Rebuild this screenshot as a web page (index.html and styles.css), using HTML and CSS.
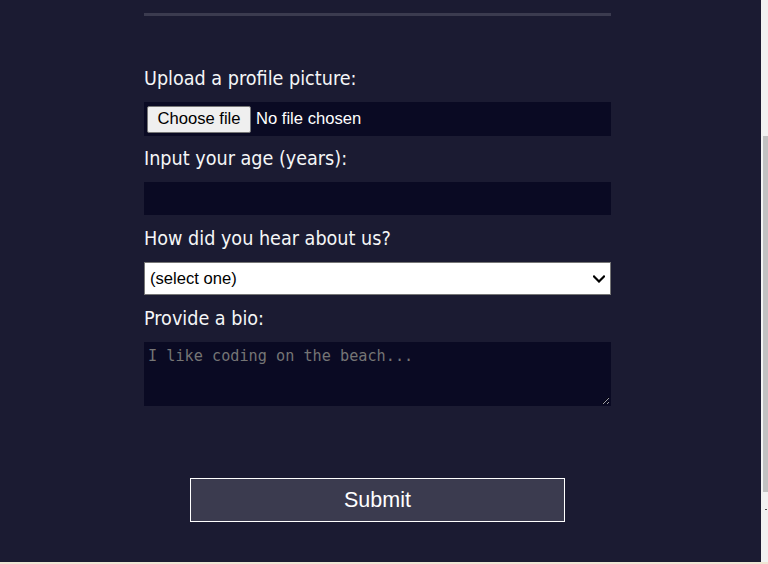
FILE: index.html
```html
<!DOCTYPE html>
<html lang="en">
<head>
<meta charset="utf-8">
<title>Survey Form</title>
<link rel="stylesheet" href="styles.css">
</head>
<body>
<div class="viewport">
  <main class="page">
    <form class="survey" onsubmit="return false">
      <div class="divider"></div>
      <label class="field-label" for="picture">Upload a profile picture:</label>
      <div class="file-field">
        <label class="file-button" for="picture">Choose file</label>
        <span class="file-status">No file chosen</span>
        <input class="file-hidden" id="picture" type="file" name="file">
      </div>
      <label class="field-label" for="age">Input your age (years):</label>
      <input class="text-input" id="age" type="number" name="age" min="13" max="120">
      <label class="field-label" for="referrer">How did you hear about us?</label>
      <div class="select-wrap">
        <select class="select-input" id="referrer" name="referrer">
          <option value="">(select one)</option>
          <option value="1">freeCodeCamp News</option>
          <option value="2">freeCodeCamp YouTube Channel</option>
          <option value="3">freeCodeCamp Forum</option>
          <option value="4">Other</option>
        </select>
        <svg class="select-chevron" width="12" height="8" viewBox="0 0 12 8" aria-hidden="true">
          <path d="M1 1.5 L6 6.5 L11 1.5" fill="none" stroke="#000" stroke-width="2.2" stroke-linecap="square" stroke-linejoin="miter"/>
        </svg>
      </div>
      <label class="field-label" for="bio">Provide a bio:</label>
      <textarea class="bio-input" id="bio" name="bio" rows="3" cols="30" placeholder="I like coding on the beach..."></textarea>
      <input class="submit-btn" type="submit" value="Submit">
    </form>
  </main>
  <div class="scrollbar">
    <div class="scroll-thumb"></div>
    <div class="scroll-arrow"></div>
  </div>
</div>
<div class="bottom-strip"></div>
</body>
</html>
```

FILE: styles.css
```css
html, body {
  margin: 0;
  padding: 0;
}

body {
  width: 768px;
  height: 564px;
  overflow: hidden;
  background: #1b1b32;
  color: #f5f6f7;
  font-family: "DejaVu Sans Condensed", "DejaVu Sans", sans-serif;
  font-stretch: condensed;
  display: flex;
  flex-direction: column;
}

.viewport {
  display: flex;
  height: 562px;
}

.page {
  flex: 1;
  background: #1b1b32;
}

.survey {
  width: 467px;
  margin-left: 144px;
  display: flex;
  flex-direction: column;
}

.divider {
  margin-top: 13px;
  height: 3px;
  background: #3b3b4f;
}

.field-label {
  display: block;
  font-size: 19.6px;
  line-height: 24px;
  margin: 12px 0 11px;
}

.divider + .field-label {
  margin-top: 51px;
}

.file-field + .field-label {
  margin-top: 11px;
}

.file-field {
  display: flex;
  align-items: center;
  box-sizing: border-box;
  height: 34px;
  padding: 0 3px;
  background: #0a0a23;
  color: #ffffff;
  font-family: "Liberation Sans", Arial, sans-serif;
  font-size: 16.6px;
}

.file-button {
  box-sizing: border-box;
  display: flex;
  align-items: center;
  justify-content: center;
  width: 104px;
  height: 27px;
  margin-right: 5px;
  background: #efefef;
  color: #000000;
  border: 1px solid #767676;
  border-radius: 2px;
  cursor: default;
}

.file-status {
  white-space: nowrap;
}

.file-hidden {
  display: none;
}

.text-input {
  display: block;
  box-sizing: border-box;
  width: 100%;
  height: 33px;
  margin: 0;
  background: #0a0a23;
  border: 1px solid #0a0a23;
  color: #ffffff;
  font-family: "Liberation Sans", Arial, sans-serif;
  font-size: 16px;
}

.select-wrap {
  position: relative;
}

.select-input {
  display: block;
  box-sizing: border-box;
  width: 100%;
  height: 33px;
  margin: 0;
  padding: 0 30px 0 5px;
  background: #ffffff;
  border: 1px solid #767676;
  border-radius: 0;
  color: #000000;
  font-family: "Liberation Sans", Arial, sans-serif;
  font-size: 16.6px;
  appearance: none;
  -webkit-appearance: none;
}

.select-chevron {
  position: absolute;
  right: 6px;
  top: 13px;
  pointer-events: none;
}

.bio-input {
  display: block;
  box-sizing: border-box;
  width: 100%;
  height: 64px;
  margin: 0;
  padding: 3px 3px;
  background: #0a0a23;
  border: 1px solid #0a0a23;
  color: #ffffff;
  font-family: "DejaVu Sans Mono", "Liberation Mono", monospace;
  font-size: 15.2px;
  line-height: 20px;
}

.bio-input::placeholder {
  color: #757575;
}

.submit-btn {
  display: block;
  box-sizing: border-box;
  width: 375px;
  height: 44px;
  margin: 72px 0 0 46px;
  padding: 0;
  background: #3b3b4f;
  border: 1px solid #ffffff;
  color: #ffffff;
  font-family: "Liberation Sans", Arial, sans-serif;
  font-size: 21.5px;
}

.scrollbar {
  width: 7px;
  background: #f1f1f1;
  display: flex;
  flex-direction: column;
  align-items: flex-end;
}

.scroll-thumb {
  width: 5px;
  height: 356px;
  margin-top: 136px;
  background: #c1c1c1;
}

.scroll-arrow {
  width: 2px;
  height: 1px;
  margin-top: 17px;
  margin-right: 1px;
  background: #505050;
}

.bottom-strip {
  height: 2px;
  background: #efe6d4;
}
```
